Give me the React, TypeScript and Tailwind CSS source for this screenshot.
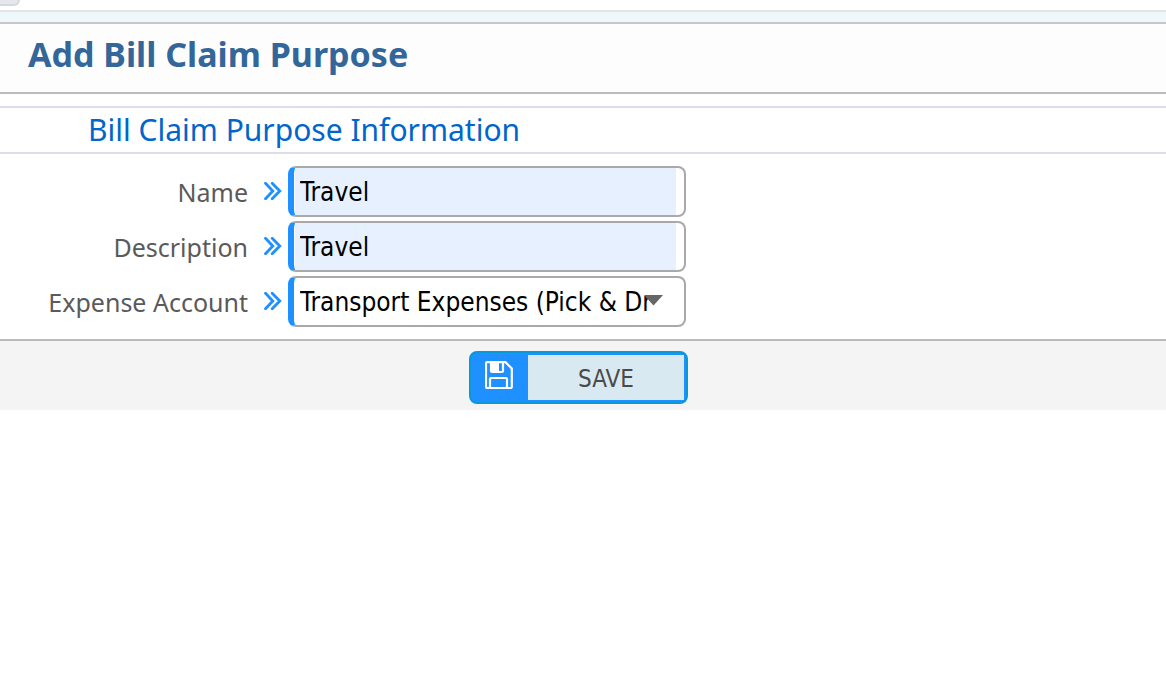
import React, { useState } from "react";

const fieldClass =
  "w-[398px] h-[51px] rounded-lg border-2 border-l-6 border-[#a9a9a9] border-l-[#1e90ff] bg-white";
const controlFont =
  "font-['DejaVu_Sans_Condensed','DejaVu_Sans',sans-serif] text-[26px] text-black";

const ChevronsIcon = () => (
  <svg
    width="18"
    height="18"
    viewBox="0 0 18 18"
    fill="none"
    stroke="#1e90ff"
    strokeWidth="2.8"
    strokeLinecap="round"
    strokeLinejoin="miter"
    aria-hidden="true"
  >
    <path d="M1.5 1.3 8.8 9l-7.3 7.7M8.2 1.3 15.8 9l-7.6 7.7" />
  </svg>
);

const SaveIcon = () => (
  <svg width="28" height="28" viewBox="0 0 28 28" fill="none" aria-hidden="true">
    <path
      d="M2 1.200h18.500L26.800 7.500V26a1 1 0 0 1-1 1H2a1 1 0 0 1-1-1V2.200a1 1 0 0 1 1-1Z"
      stroke="#fff"
      strokeWidth="2.2"
    />
    <path
      d="M6 1v9a1 1 0 0 0 1 1h10a1 1 0 0 0 1-1V1M5 27v-9a1 1 0 0 1 1-1h15a1 1 0 0 1 1 1v9"
      stroke="#fff"
      strokeWidth="2.2"
    />
    <path d="M6 1h8v9H6z" fill="#fff" />
  </svg>
);

interface FormRowProps {
  id: string;
  label: string;
  children: React.ReactNode;
}

const FormRow: React.FC<FormRowProps> = ({ id, label, children }) => {
  return (
    <div className="flex items-center">
      <label
        htmlFor={id}
        className="w-[248px] shrink-0 text-right text-[25px] leading-8 text-[#5a5a5a]"
      >
        {label}
      </label>
      <span className="w-10 shrink-0 pb-0.5 pl-4">
        <ChevronsIcon />
      </span>
      {children}
    </div>
  );
};

interface TextFieldProps {
  id: string;
  value: string;
  onChange: (value: string) => void;
}

const TextField: React.FC<TextFieldProps> = ({ id, value, onChange }) => (
  <div className={`${fieldClass} flex pl-px pr-2`}>
    <input
      id={id}
      type="text"
      value={value}
      onChange={(e) => onChange(e.target.value)}
      className={`${controlFont} min-w-0 flex-1 bg-[#e6f0ff] pl-[5px] pt-0.5 focus:outline-none`}
    />
  </div>
);

export default function App() {
  const [name, setName] = useState("Travel");
  const [description, setDescription] = useState("Travel");

  return (
    <div className="font-['Noto_Sans','Open_Sans',sans-serif]">
      {/* Tab strip */}
      <div className="h-3 border-b-2 border-[#e4e4e4] bg-white">
        <div className="h-1.5 w-5 rounded-br-lg border-r-2 border-b-2 border-[#d3dadd] bg-[#e4e8ec]" />
      </div>
      <div className="h-3 border-b-2 border-[#c8c8c8] bg-[#eef7f9]" />

      <header className="h-[70px] border-b-2 border-[#bbbbbb] bg-[#fdfdfd] pl-7 pt-1.5">
        <h1 className="text-[34px] leading-[48px] font-bold text-[#336699]">
          Add Bill Claim Purpose
        </h1>
      </header>

      <form onSubmit={(e) => e.preventDefault()}>
        <h2 className="mt-3 border-y-2 border-[#dcdcec] pl-[88px] text-[30px] leading-[44px] text-[#0066cc]">
          Bill Claim Purpose Information
        </h2>

        <div className="flex flex-col gap-1 py-3">
          <FormRow id="name" label="Name">
            <TextField id="name" value={name} onChange={setName} />
          </FormRow>
          <FormRow id="description" label="Description">
            <TextField
              id="description"
              value={description}
              onChange={setDescription}
            />
          </FormRow>
          <FormRow id="expenseAccount" label="Expense Account">
            <div className="relative">
              <select
                id="expenseAccount"
                className={`${fieldClass} ${controlFont} appearance-none pl-1.5 pr-[34px] pt-0.5 focus:outline-none`}
              >
                <option>Transport Expenses (Pick &amp; Drop)</option>
              </select>
              <svg
                className="pointer-events-none absolute right-[23px] top-[19px]"
                width="19"
                height="11"
                viewBox="0 0 19 11"
                aria-hidden="true"
              >
                <path d="M0 0h19L9.500 10.500Z" fill="#666" />
              </svg>
            </div>
          </FormRow>
        </div>

        {/* Actions */}
        <div className="flex h-[71px] justify-center border-t-2 border-[#bbbbbb] bg-[#f4f4f4] pr-[9px] pt-2.5">
          <button
            type="submit"
            className="flex h-[53px] w-[219px] rounded-lg border-2 border-[#0a98d8] bg-[#1e90ff] py-0.5 pr-0.5"
          >
            <span className="flex w-[57px] justify-center pt-1.5 pr-0.5">
              <SaveIcon />
            </span>
            <span className="flex h-full flex-1 items-center justify-center bg-[#d9e9f1] pt-0.5 font-['DejaVu_Sans_Condensed','DejaVu_Sans',sans-serif] text-2xl text-[#4a4a4a]">
              SAVE
            </span>
          </button>
        </div>
      </form>
    </div>
  );
}
